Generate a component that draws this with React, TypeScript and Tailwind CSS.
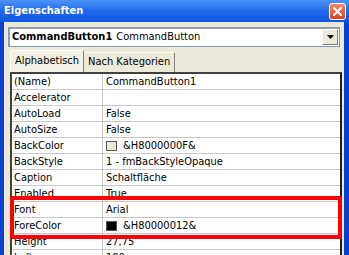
import React from "react";

interface Row {
  name: string;
  value: string;
  swatch?: string;
}

const rows: Row[] = [
  { name: "(Name)", value: "CommandButton1" },
  { name: "Accelerator", value: "" },
  { name: "AutoLoad", value: "False" },
  { name: "AutoSize", value: "False" },
  { name: "BackColor", value: "&H8000000F&", swatch: "#ece9d8" },
  { name: "BackStyle", value: "1 - fmBackStyleOpaque" },
  { name: "Caption", value: "Schaltfläche" },
  { name: "Enabled", value: "True" },
  { name: "Font", value: "Arial" },
  { name: "ForeColor", value: "&H80000012&", swatch: "#000000" },
  { name: "Height", value: "27,75" },
  { name: "Left", value: "180" },
];

const font = { fontFamily: '"DejaVu Sans Condensed", "Liberation Sans", sans-serif' };

const CloseButton = () => (
  <div className="w-[17px] h-[17px] rounded-[3px] border border-white bg-gradient-to-b from-[#f08a6a] to-[#d7401c] flex items-center justify-center">
    <svg width="9" height="9" viewBox="0 0 9 9">
      <path d="M1 1 L8 8 M8 1 L1 8" stroke="white" strokeWidth="2" strokeLinecap="square" />
    </svg>
  </div>
);

const PropRow = ({ row }: { row: Row }) => (
  <div className="flex h-[16px] border-b border-[#c8c8c8] text-[11px] leading-[15px] text-black">
    <div className="w-[91px] pl-[2px] border-r border-[#c8c8c8] whitespace-nowrap overflow-hidden">{row.name}</div>
    <div className="flex-1 flex items-center pl-[3px] whitespace-nowrap overflow-hidden">
      {row.swatch && (
        <span
          className="inline-block w-[11px] h-[10px] border border-[#555] mr-[6px]"
          style={{ backgroundColor: row.swatch }}
        />
      )}
      <span>{row.value}</span>
    </div>
  </div>
);

export default function App() {
  return (
    <div
      className="w-[349px] h-[255px] overflow-hidden flex flex-col bg-gradient-to-r from-[#0a3fd0] via-[#1f5ff0] to-[#0a3fd0] select-none"
      style={font}
    >
      {/* title bar */}
      <div className="h-[22px] shrink-0 flex items-center justify-between pl-[4px] pr-[3px] bg-gradient-to-b from-[#4a94f6] via-[#2168ea] to-[#0a58e4]">
        <span className="text-white font-bold text-[11px]">Eigenschaften</span>
        <CloseButton />
      </div>

      {/* body */}
      <div className="flex-1 ml-[4px] mr-[5px] bg-[#ece9d8] flex flex-col pt-[5px] px-[4px] relative">
        {/* object combobox */}
        <div className="h-[20px] flex items-stretch border border-[#7f9db9] bg-white shadow-[inset_1px_1px_0_#a0a0a0]">
          <div className="flex-1 flex items-center pl-[3px] text-[11px] whitespace-nowrap text-black">
            <span className="font-bold">CommandButton1</span>
            <span className="ml-[4px]">CommandButton</span>
          </div>
          <div className="w-[16px] my-[1px] mr-[1px] bg-[#ece9d8] border-t border-l border-white border-r border-b border-r-[#808080] border-b-[#808080] flex items-center justify-center">
            <svg width="7" height="4" viewBox="0 0 7 4">
              <path d="M0 0 H7 L3.5 4 Z" fill="black" />
            </svg>
          </div>
        </div>

        {/* tabs */}
        <div className="flex items-end h-[24px] pl-[2px] mt-[1px] text-[11px] text-black">
          <div className="h-[22px] px-[4px] flex items-center border-t border-l border-white border-r border-r-[#808080] bg-[#f2f0e4] rounded-t-[2px]">
            Alphabetisch
          </div>
          <div className="h-[20px] px-[4px] flex items-center border-t border-white border-r border-r-[#808080] bg-[#ece9d8] rounded-t-[2px]">
            Nach Kategorien
          </div>
        </div>

        {/* property grid */}
        <div className="flex-1 ml-[2px] mr-[-2px] border-t-2 border-l-2 border-r-2 border-t-[#404040] border-l-[#404040] border-r-[#202020] bg-white overflow-hidden">
          {rows.map((r) => (
            <PropRow key={r.name} row={r} />
          ))}
        </div>

        {/* highlight */}
        <div className="absolute left-[6px] top-[174px] w-[332px] h-[43px] border-[4px] border-[#ff0000] rounded-[2px]" />
      </div>
    </div>
  );
}
